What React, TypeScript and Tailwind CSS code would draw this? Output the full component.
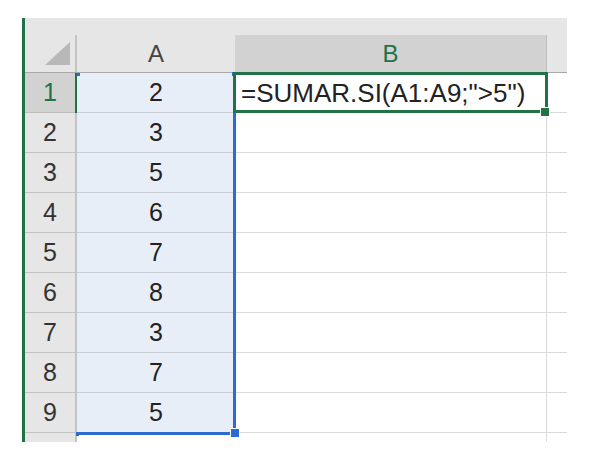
import React from "react";

const values = [2, 3, 5, 6, 7, 8, 3, 7, 5];
const font = { fontFamily: '"Liberation Sans", Arial, sans-serif' };

export default function App() {
  return (
    <div className="w-[597px] h-[459px] bg-white pt-[18px] pl-[22px]" style={font}>
      <div className="flex">
        <div className="w-[3px] h-[424px] bg-[#217346]" />
        <div className="relative w-[542px] flex flex-col">
          {/* top strip */}
          <div className="h-[17px] bg-[#e6e6e6]" />
          {/* column headers */}
          <div className="flex h-[38px] border-b border-[#a9a9a9] bg-[#e6e6e6] text-[24px] leading-none">
            <div className="w-[50px] h-full relative">
              <svg className="absolute left-0 top-0" width="50" height="37" viewBox="0 0 50 37">
                <polygon points="20,30 45,30 45,7" fill="#b8b8b8" />
              </svg>
            </div>
            <div className="w-[2px] h-full bg-[#c4c4c4]" />
            <div className="w-[158px] flex items-center justify-center text-[#444]">A</div>
            <div className="w-[311px] flex items-center justify-center bg-[#d2d2d2] text-[#217346]">B</div>
            <div className="w-[1px] bg-[#bdbdbd]" />
            <div className="w-[20px]" />
          </div>
          {/* rows */}
          {values.map((v, i) => (
            <div key={i} className="flex h-[40px] text-[25px] leading-none">
              <div
                className={
                  i === 0
                    ? "w-[50px] h-full flex items-center justify-center bg-[#d2d2d2] text-[#217346] border-b border-[#bdbdbd]"
                    : "w-[50px] h-full flex items-center justify-center bg-[#e6e6e6] text-[#333] border-b border-[#c4c4c4]"
                }
              >
                {i + 1}
              </div>
              <div className={i === 0 ? "w-[2px] h-full bg-[#217346]" : "w-[2px] h-full bg-[#c4c4c4]"} />
              <div className="w-[158px] h-full flex items-center justify-center bg-[#e8eef8] text-[#222] border-b border-[#c9cdd4]">
                {v}
              </div>
              <div className="w-[311px] h-full flex items-center pl-[6px] border-b border-[#dadada] text-[#222] text-[26px] whitespace-nowrap">
                {i === 0 ? '=SUMAR.SI(A1:A9;">5")' : ""}
              </div>
              <div className="w-[1px] h-full bg-[#dadada]" />
              <div className="w-[20px] h-full border-b border-[#dadada]" />
            </div>
          ))}
          {/* partial row */}
          <div className="flex h-[9px]">
            <div className="w-[50px] h-full bg-[#e6e6e6]" />
            <div className="w-[2px] h-full bg-[#c4c4c4]" />
            <div className="w-[158px] h-full" />
            <div className="w-[311px] h-full" />
            <div className="w-[1px] h-full bg-[#dadada]" />
            <div className="w-[20px] h-full" />
          </div>

          {/* selection overlay A1:A9 */}
          <div className="absolute left-[208px] top-[55px] w-[3px] h-[362px] bg-[#2e6bd0]" />
          <div className="absolute left-[52px] top-[414px] w-[159px] h-[3px] bg-[#2e6bd0]" />
          <div className="absolute left-[52px] top-[55px] w-[3px] h-[3px] bg-[#2e6bd0]" />
          <div className="absolute left-[207px] top-[54px] w-[4px] h-[4px] bg-[#2e6bd0]" />
          <div className="absolute left-[51px] top-[414px] w-[3px] h-[4px] bg-[#2e6bd0]" />
          <div className="absolute left-[205px] top-[410px] w-[10px] h-[10px] bg-[#2e6bd0] border border-white" />

          {/* active cell B1 */}
          <div className="absolute left-[208px] top-[54px] w-[315px] h-[41px] border-[3px] border-[#217346]" />
          <div className="absolute left-[515px] top-[89px] w-[10px] h-[10px] bg-[#217346] border border-white" />
        </div>
      </div>
    </div>
  );
}
